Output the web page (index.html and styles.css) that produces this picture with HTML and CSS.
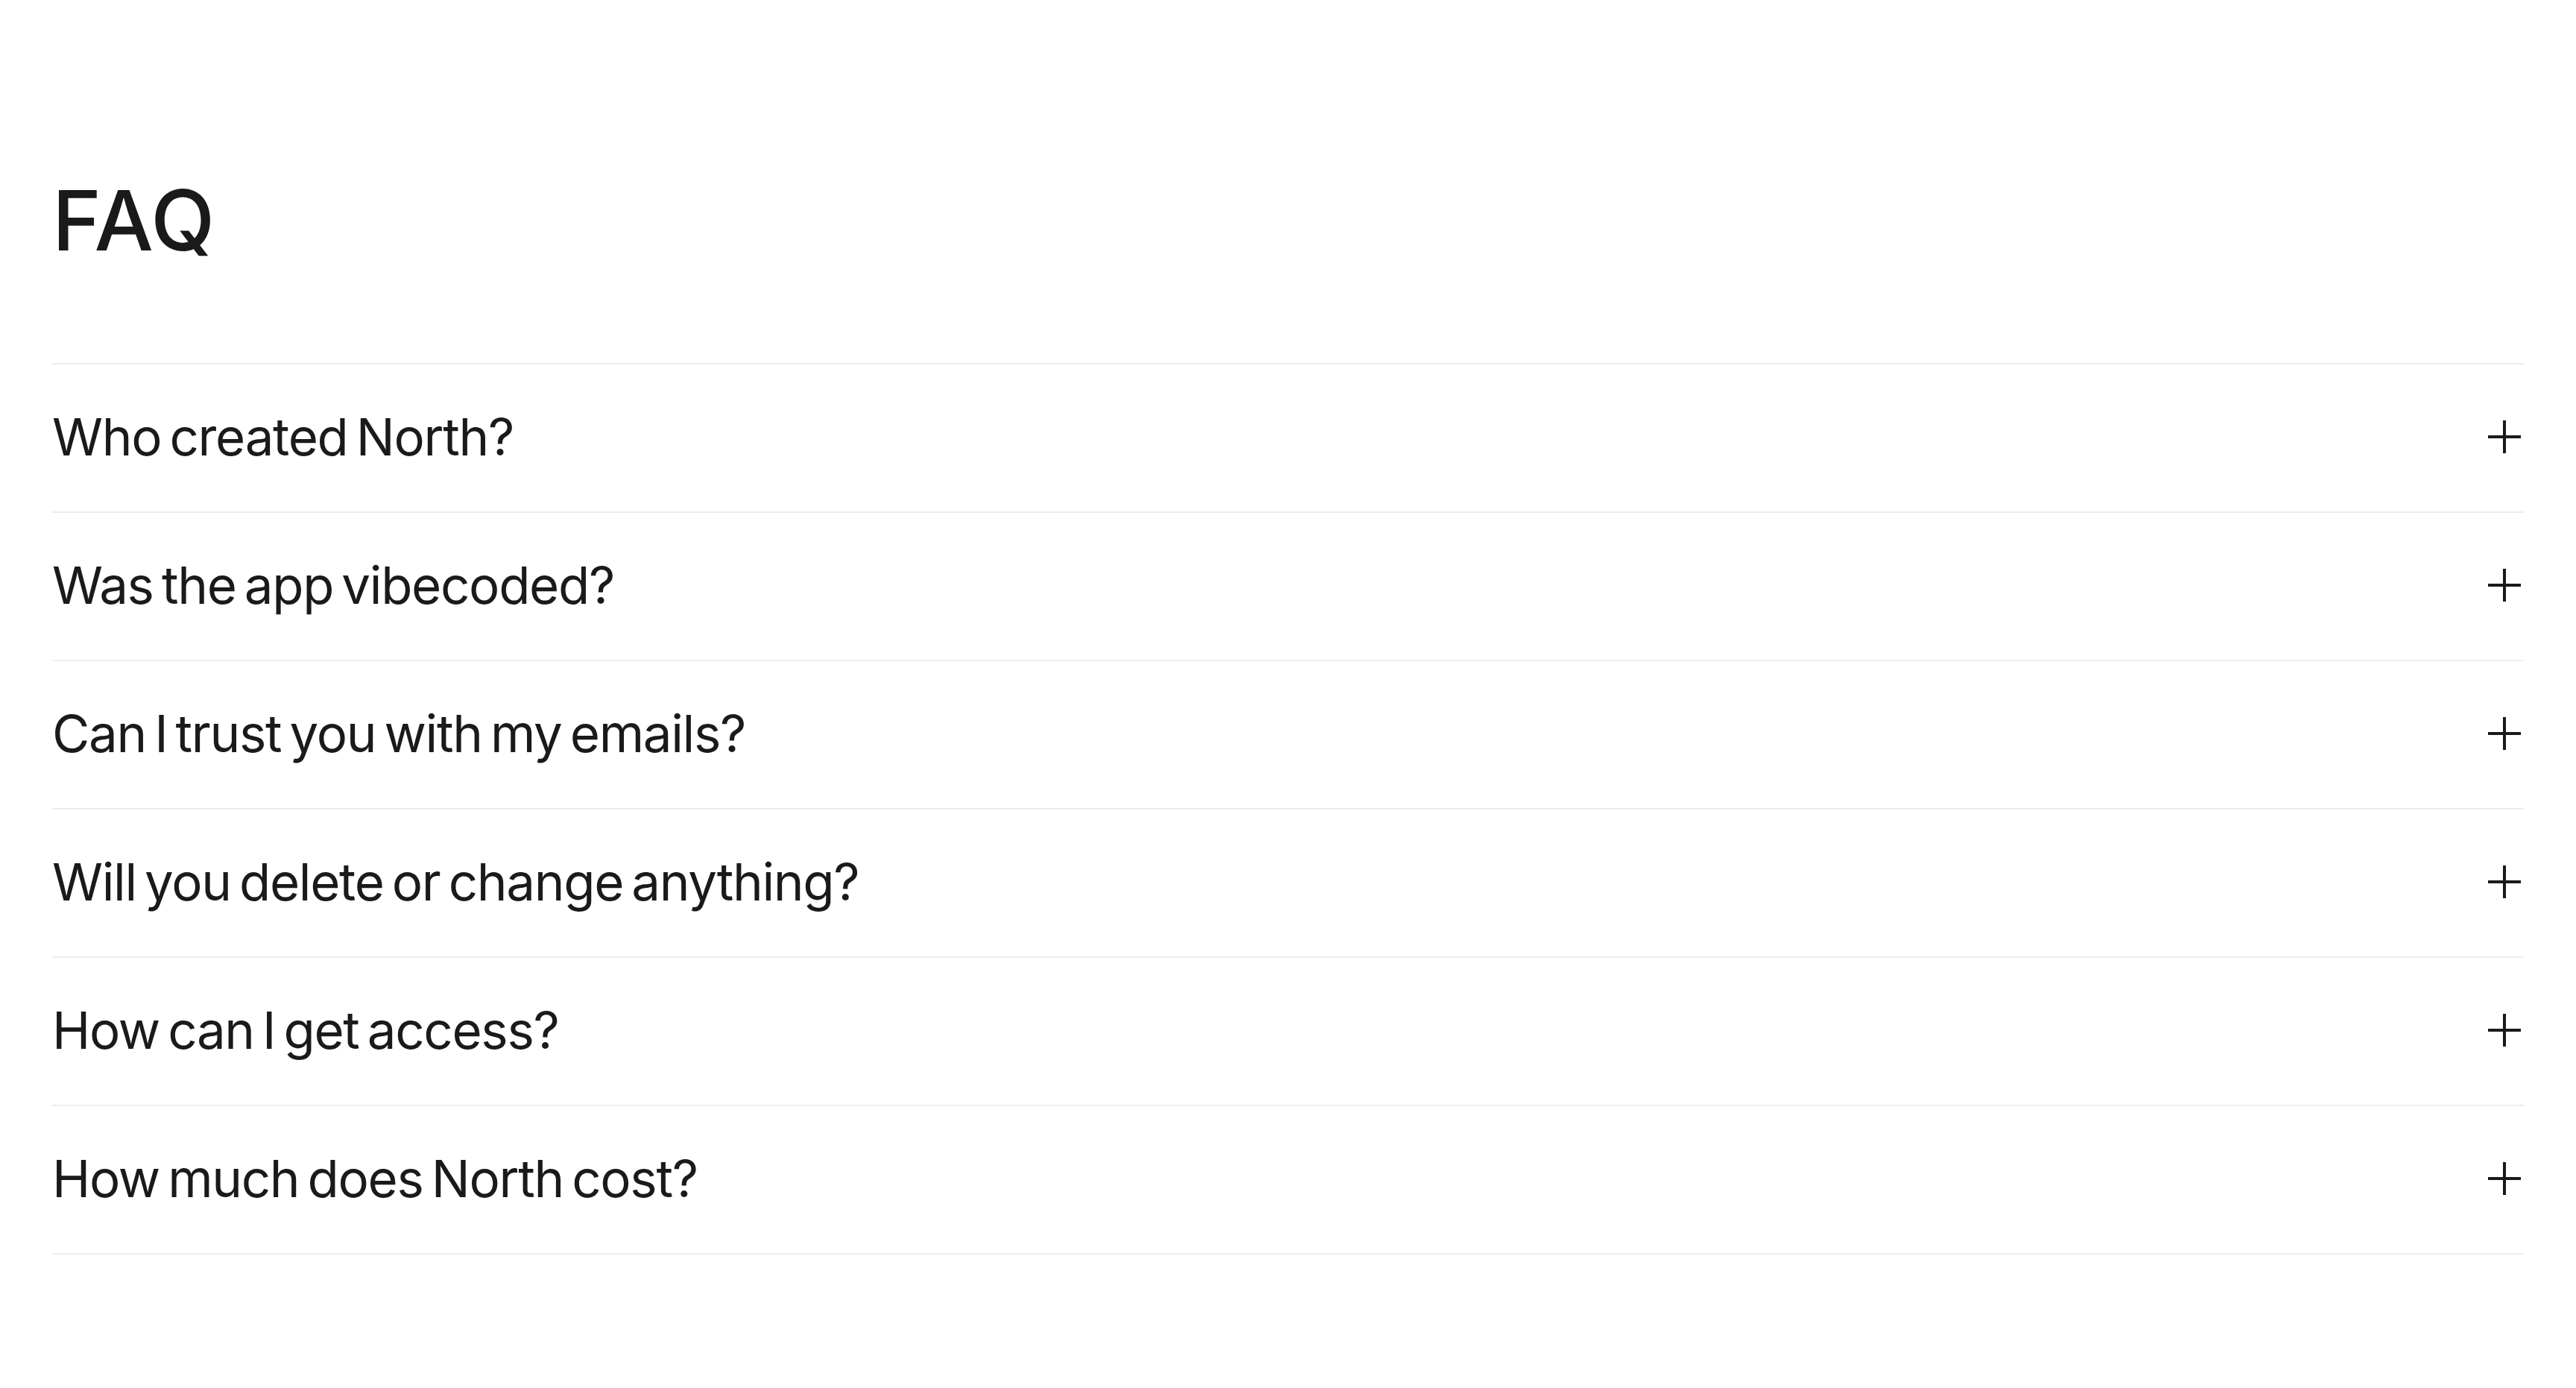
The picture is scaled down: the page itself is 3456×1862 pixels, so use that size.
FILE: index.html
```html
<!DOCTYPE html>
<html lang="en">
<head>
    <meta charset="UTF-8">
    <meta name="viewport" content="width=device-width, initial-scale=1.0">
    <title>FAQ</title>
    <link rel="stylesheet" href="styles.css">
</head>
<body>
    <section class="faq">
        <h1 class="faq-title">FAQ</h1>
        <ul class="faq-list">
            <li class="faq-item">
                <button type="button" class="faq-question">
                    <span>Who created North?</span>
                    <svg class="faq-icon" viewBox="0 0 44 44"><path d="M22 0V44M0 22H44"/></svg>
                </button>
            </li>
            <li class="faq-item">
                <button type="button" class="faq-question">
                    <span>Was the app vibecoded?</span>
                    <svg class="faq-icon" viewBox="0 0 44 44"><path d="M22 0V44M0 22H44"/></svg>
                </button>
            </li>
            <li class="faq-item">
                <button type="button" class="faq-question">
                    <span>Can I trust you with my emails?</span>
                    <svg class="faq-icon" viewBox="0 0 44 44"><path d="M22 0V44M0 22H44"/></svg>
                </button>
            </li>
            <li class="faq-item">
                <button type="button" class="faq-question">
                    <span>Will you delete or change anything?</span>
                    <svg class="faq-icon" viewBox="0 0 44 44"><path d="M22 0V44M0 22H44"/></svg>
                </button>
            </li>
            <li class="faq-item">
                <button type="button" class="faq-question">
                    <span>How can I get access?</span>
                    <svg class="faq-icon" viewBox="0 0 44 44"><path d="M22 0V44M0 22H44"/></svg>
                </button>
            </li>
            <li class="faq-item">
                <button type="button" class="faq-question">
                    <span>How much does North cost?</span>
                    <svg class="faq-icon" viewBox="0 0 44 44"><path d="M22 0V44M0 22H44"/></svg>
                </button>
            </li>
        </ul>
    </section>
</body>
</html>
```

FILE: styles.css
```css
body {
    margin: 0;
    background-color: #ffffff;
    color: #1a1a1a;
    font-family: 'Inter', 'Liberation Sans', sans-serif;
}
.faq {
    padding: 229px 70px 0 70px;
}
.faq-title {
    margin: 0 0 126px 0;
    font-size: 112px;
    font-weight: 500;
    line-height: 132px;
    letter-spacing: 0.005em;
}
.faq-list {
    list-style: none;
    margin: 0;
    padding: 0;
}
.faq-item {
    border-top: 2px solid #ececec;
}
.faq-item:last-child {
    border-bottom: 2px solid #ececec;
}
.faq-question {
    display: flex;
    align-items: center;
    justify-content: space-between;
    width: 100%;
    height: 197px;
    padding: 0 4px 4px 0;
    border: none;
    background: none;
    color: #1a1a1a;
    font-family: inherit;
    font-size: 69px;
    font-weight: 400;
    letter-spacing: -0.019em;
    word-spacing: -0.1em;
    text-align: left;
    cursor: pointer;
}
.faq-icon {
    width: 44px;
    height: 44px;
    stroke: #1a1a1a;
    stroke-width: 4;
    fill: none;
}
```
